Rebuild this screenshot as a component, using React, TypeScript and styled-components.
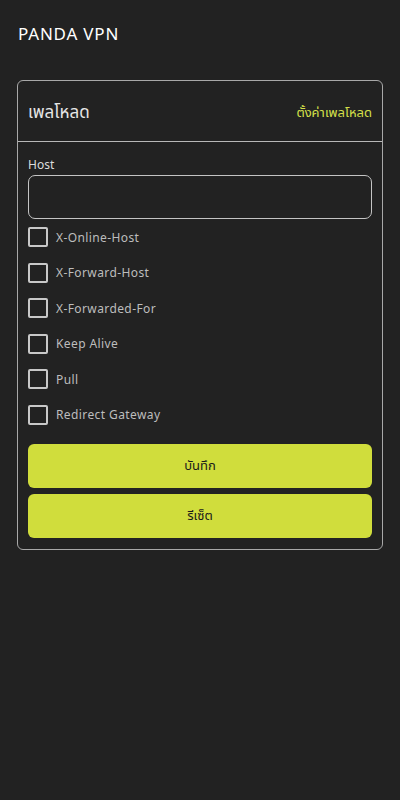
import React from "react";
import styled, { createGlobalStyle } from "styled-components";

const Global = createGlobalStyle`
  html, body { margin: 0; padding: 0; background: #222222; }
  body { font-family: "Noto Sans", "Noto Sans Thai", "DejaVu Sans", sans-serif; }
  * { box-sizing: border-box; }
`;

const Page = styled.div`
  width: 400px;
  min-height: 800px;
  background: #222222;
  padding: 0 17px;
  display: flex;
  flex-direction: column;
`;

const TopBar = styled.div`
  height: 66px;
  display: flex;
  align-items: center;
  padding-left: 1px;
  color: #ffffff;
  font-size: 17px;
  letter-spacing: 0.8px;
`;

const Card = styled.div`
  margin-top: 14px;
  border: 1px solid #a8a8a8;
  border-radius: 6px;
  display: flex;
  flex-direction: column;
`;

const CardHeader = styled.div`
  height: 61px;
  display: flex;
  align-items: center;
  justify-content: space-between;
  padding: 4px 10px 0;
  border-bottom: 1px solid #b8b8b8;
`;

const HeaderTitle = styled.div`
  color: #e6e6e6;
  font-size: 17px;
`;

const HeaderLink = styled.div`
  color: #d5e04a;
  font-size: 13px;
`;

const Body = styled.div`
  padding: 16px 10px 11px;
  display: flex;
  flex-direction: column;
`;

const FieldLabel = styled.div`
  color: #dcdcdc;
  font-size: 12px;
  line-height: 14px;
`;

const Input = styled.div`
  margin-top: 3px;
  height: 44px;
  border: 1px solid #c4c4c4;
  border-radius: 7px;
`;

const Checks = styled.div`
  margin-top: 8px;
  display: flex;
  flex-direction: column;
  gap: 15.6px;
`;

const CheckRow = styled.div`
  display: flex;
  align-items: center;
  gap: 8px;
  height: 20px;
`;

const Box = styled.div`
  width: 20px;
  height: 20px;
  border: 2px solid #c8c8c8;
  border-radius: 2px;
`;

const CheckLabel = styled.div`
  color: #bdbdbd;
  font-size: 12px;
  letter-spacing: 0.4px;
`;

const Buttons = styled.div`
  margin-top: 19px;
  display: flex;
  flex-direction: column;
  gap: 6px;
`;

const Button = styled.div`
  height: 44px;
  border-radius: 6px;
  background: #d0dd3c;
  color: #1a1a1a;
  font-size: 13px;
  display: flex;
  align-items: center;
  justify-content: center;
`;

const options = [
  "X-Online-Host",
  "X-Forward-Host",
  "X-Forwarded-For",
  "Keep Alive",
  "Pull",
  "Redirect Gateway",
];

export default function App() {
  return (
    <>
      <Global />
      <Page>
        <TopBar>PANDA VPN</TopBar>
        <Card>
          <CardHeader>
            <HeaderTitle>เพลโหลด</HeaderTitle>
            <HeaderLink>ตั้งค่าเพลโหลด</HeaderLink>
          </CardHeader>
          <Body>
            <FieldLabel>Host</FieldLabel>
            <Input />
            <Checks>
              {options.map((o) => (
                <CheckRow key={o}>
                  <Box />
                  <CheckLabel>{o}</CheckLabel>
                </CheckRow>
              ))}
            </Checks>
            <Buttons>
              <Button>บันทึก</Button>
              <Button>รีเซ็ต</Button>
            </Buttons>
          </Body>
        </Card>
      </Page>
    </>
  );
}
